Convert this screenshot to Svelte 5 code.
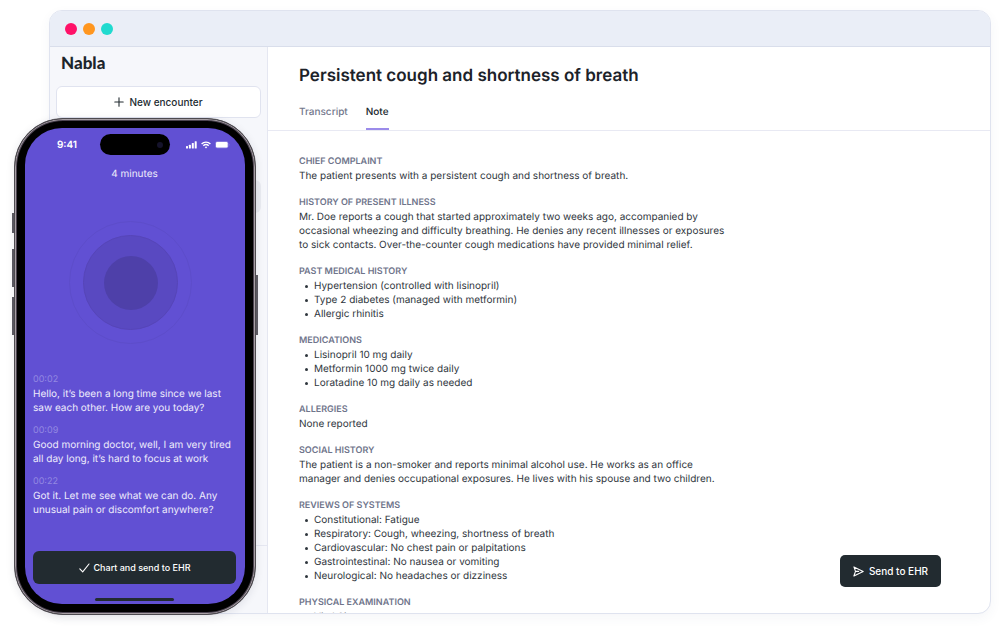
<script>
  const sections = [
    { title: 'Chief complaint', text: 'The patient presents with a persistent cough and shortness of breath.' },
    {
      title: 'History of present illness',
      text: 'Mr. Doe reports a cough that started approximately two weeks ago, accompanied by occasional wheezing and difficulty breathing. He denies any recent illnesses or exposures to sick contacts. Over-the-counter cough medications have provided minimal relief.'
    },
    {
      title: 'Past medical history',
      items: ['Hypertension (controlled with lisinopril)', 'Type 2 diabetes (managed with metformin)', 'Allergic rhinitis']
    },
    {
      title: 'Medications',
      items: ['Lisinopril 10 mg daily', 'Metformin 1000 mg twice daily', 'Loratadine 10 mg daily as needed']
    },
    { title: 'Allergies', text: 'None reported' },
    {
      title: 'Social history',
      text: 'The patient is a non-smoker and reports minimal alcohol use. He works as an office manager and denies occupational exposures. He lives with his spouse and two children.'
    },
    {
      title: 'Reviews of systems',
      items: [
        'Constitutional: Fatigue',
        'Respiratory: Cough, wheezing, shortness of breath',
        'Cardiovascular: No chest pain or palpitations',
        'Gastrointestinal: No nausea or vomiting',
        'Neurological: No headaches or dizziness'
      ]
    },
    { title: 'Physical examination', items: ['Vital Signs:'] }
  ];

  const transcript = [
    { time: '00:02', text: 'Hello, it’s been a long time since we last saw each other. How are you today?' },
    { time: '00:09', text: 'Good morning doctor, well, I am very tired all day long, it’s hard to focus at work' },
    { time: '00:22', text: 'Got it. Let me see what we can do. Any unusual pain or discomfort anywhere?' }
  ];
</script>

<div class="stage">
  <div class="window">
    <div class="titlebar">
      <span class="dot red"></span>
      <span class="dot orange"></span>
      <span class="dot teal"></span>
    </div>
    <div class="body">
      <aside class="sidebar">
        <div class="logo">Nabla</div>
        <button class="new" type="button">
          <svg width="10" height="10" viewBox="0 0 10 10" fill="none" stroke="#222b30" stroke-width="1.1" stroke-linecap="round">
            <path d="M5 .8v8.4M.8 5h8.4" />
          </svg>
          New encounter
        </button>
        <div class="current"></div>
        <div class="account"></div>
      </aside>
      <main>
        <header>
          <h1>Persistent cough and shortness of breath</h1>
          <nav>
            <a href="#transcript">Transcript</a>
            <a href="#note" class="active">Note</a>
          </nav>
        </header>
        <div class="note">
          {#each sections as s}
            <section>
              <h2>{s.title}</h2>
              {#if s.text}<p>{s.text}</p>{/if}
              {#if s.items}
                <ul>
                  {#each s.items as item}<li>{item}</li>{/each}
                </ul>
              {/if}
            </section>
          {/each}
        </div>
        <button class="send" type="button">
          <svg width="11" height="11" viewBox="0 0 11 11" fill="none" stroke="#fff" stroke-width="1.1" stroke-linejoin="round" stroke-linecap="round">
            <path d="M.9 .9 10.2 5.4.9 10 2.5 5.4ZM2.5 5.4H5.6" />
          </svg>
          Send to EHR
        </button>
      </main>
    </div>
  </div>

  <div class="phone">
    <span class="key mute"></span>
    <span class="key up"></span>
    <span class="key down"></span>
    <span class="key power"></span>
    <div class="screen">
      <div class="status">
        <span class="clock">9:41</span>
        <span class="island"><span class="lens"></span></span>
        <span class="signals">
          <svg width="11" height="8" viewBox="0 0 11 8" fill="#fff">
            <rect x="0" y="5" width="2" height="2.6" rx=".5" />
            <rect x="2.9" y="3.8" width="2" height="3.8" rx=".5" />
            <rect x="5.8" y="2" width="2" height="5.6" rx=".5" />
            <rect x="8.7" y=".3" width="2" height="7.3" rx=".5" />
          </svg>
          <svg width="10" height="8" viewBox="0 0 10 8" fill="none" stroke="#fff" stroke-width="1.4">
            <path d="M.6 2.9C3 .5 7 .5 9.4 2.9M2.3 4.7c1.5-1.4 3.9-1.4 5.4 0" />
            <path d="M3.7 6.1Q5 5 6.3 6.1L5 7.6Z" fill="#fff" stroke="none" />
          </svg>
          <svg width="15" height="8" viewBox="0 0 15 8">
            <rect x=".3" y=".3" width="13" height="7" rx="2" fill="#8f84e0" />
            <rect x="1" y="1" width="11.6" height="5.6" rx="1.3" fill="#fff" />
            <path d="M13.9 2.7q1 1 0 2.2z" fill="#a79fe6" />
          </svg>
        </span>
      </div>
      <div class="duration">4 minutes</div>
      <div class="pulse"><div class="ring"><div class="core"></div></div></div>
      <div class="lines">
        {#each transcript as t}
          <div class="line">
            <time>{t.time}</time>
            <p>{t.text}</p>
          </div>
        {/each}
      </div>
      <button class="chart" type="button">
        <svg width="11" height="10" viewBox="0 0 11 10" fill="none" stroke="#fff" stroke-width="1.1" stroke-linecap="round" stroke-linejoin="round">
          <path d="M.8 5.8 3.7 8.8 10 1" />
        </svg>
        Chart and send to EHR
      </button>
      <div class="home"></div>
    </div>
  </div>
</div>

<style>
  :global(body) {
    margin: 0;
    background: #fff;
  }
  * {
    box-sizing: border-box;
  }
  .stage {
    position: relative;
    height: 100vh;
    padding: 10px 11px 15px 49px;
    font-family: Inter, sans-serif;
    font-size: 10px;
    line-height: 14px;
    font-optical-sizing: none;
    text-rendering: geometricPrecision;
    color: #2f363d;
    overflow: hidden;
  }
  h1, h2, p, ul {
    margin: 0;
    padding: 0;
  }
  button {
    font: inherit;
    font-weight: 500;
    display: flex;
    align-items: center;
    justify-content: center;
    border: 0;
    padding: 0;
  }
  .window {
    height: 100%;
    display: flex;
    flex-direction: column;
    border: 1px solid #dfe3ef;
    border-radius: 13px;
    overflow: hidden;
    background: #fff;
    box-shadow: 0 4px 12px rgba(60, 70, 110, 0.05);
  }
  .titlebar {
    flex: none;
    height: 36px;
    display: flex;
    align-items: center;
    gap: 6px;
    padding-left: 15px;
    background: #eaeef7;
    border-bottom: 1px solid #d9deeb;
  }
  .dot {
    width: 12px;
    height: 12px;
    border-radius: 50%;
  }
  .red { background: #ff1168; }
  .orange { background: #ff961f; }
  .teal { background: #20dacf; }
  .body {
    flex: 1;
    min-height: 0;
    display: flex;
  }
  .sidebar {
    flex: none;
    width: 218px;
    display: flex;
    flex-direction: column;
    padding: 6px 6px 0;
    background: #f6f7fb;
    border-right: 1px solid #e5e7f1;
  }
  .logo {
    padding-left: 5px;
    font-family: Lato, sans-serif;
    font-weight: 900;
    font-size: 17px;
    line-height: 20px;
    color: #1d252b;
  }
  .new {
    height: 32px;
    margin-top: 13px;
    gap: 5px;
    border: 1px solid #e0e3ef;
    border-radius: 6px;
    background: #fff;
    color: #222b30;
  }
  .current {
    height: 33px;
    margin-top: 62px;
    border-radius: 6px;
    background: #e9ebf1;
  }
  .account {
    height: 68px;
    margin: auto -6px 0;
    border-top: 1px solid #e5e7f1;
  }
  main {
    position: relative;
    flex: 1;
    min-width: 0;
    overflow: hidden;
  }
  header {
    padding: 17px 31px 0;
    border-bottom: 1px solid #e8e9f3;
  }
  h1 {
    font-size: 17px;
    line-height: 24px;
    font-weight: 600;
    color: #1c2229;
  }
  nav {
    display: flex;
    gap: 18px;
    margin-top: 17px;
  }
  nav a {
    height: 25px;
    color: #73788d;
    text-decoration: none;
    font-weight: 500;
  }
  nav .active {
    color: #20282e;
    border-bottom: 2px solid #9b8bea;
  }
  .note {
    max-width: 496px;
    padding: 23px 31px 0;
    display: flex;
    flex-direction: column;
    gap: 12px;
  }
  h2 {
    font-size: 9px;
    line-height: 15px;
    font-weight: 600;
    text-transform: uppercase;
    color: #6f758b;
  }
  ul {
    list-style: none;
  }
  li {
    display: flex;
    align-items: center;
    gap: 6px;
    padding-left: 6px;
  }
  li::before {
    content: '';
    flex: none;
    width: 3px;
    height: 3px;
    border-radius: 50%;
    background: #2f363d;
  }
  .send {
    position: absolute;
    right: 49px;
    bottom: 26px;
    width: 101px;
    height: 32px;
    gap: 5px;
    border-radius: 5px;
    background: #222b30;
    color: #fff;
  }
  .phone {
    position: absolute;
    left: 14px;
    top: 118px;
    bottom: 14px;
    width: 242px;
    padding: 9px 10px 10px;
    border: 1px solid #4d4a50;
    border-radius: 49px;
    background: #000;
    box-shadow: inset 0 0 0 1px #a79fa4, inset 0 0 0 2px #4b4350, 0 2px 8px rgba(30, 30, 60, 0.1);
  }
  .key {
    position: absolute;
    width: 2px;
    background: #77747c;
    border: 1px solid #5a5860;
  }
  .mute { left: -3px; top: 94px; height: 20px; }
  .up { left: -3px; top: 130px; height: 38px; }
  .down { left: -3px; top: 178px; height: 38px; }
  .power { right: -3px; top: 156px; height: 60px; }
  .screen {
    height: 100%;
    display: flex;
    flex-direction: column;
    padding: 6px 9px 3px 8px;
    border-radius: 37px;
    background: #6150d3;
    color: #eeecfb;
  }
  .status {
    display: grid;
    grid-template-columns: 1fr 70px 1fr;
    align-items: center;
    padding-left: 1px;
  }
  .clock {
    text-align: center;
    font-weight: 600;
    color: #fff;
  }
  .island {
    display: flex;
    align-items: center;
    justify-content: flex-end;
    height: 21px;
    padding-right: 7px;
    border-radius: 11px;
    background: #000;
  }
  .lens {
    width: 6px;
    height: 6px;
    border-radius: 50%;
    background: #15132b;
  }
  .signals {
    display: flex;
    align-items: center;
    justify-content: center;
    gap: 4px;
    padding-left: 9px;
  }
  .duration {
    margin-top: 12px;
    text-align: center;
  }
  .pulse {
    width: 123px;
    height: 123px;
    margin: 40px 0 0 36px;
    display: grid;
    place-items: center;
    border: 1px solid #5d4dca;
    border-radius: 50%;
  }
  .ring {
    width: 95px;
    height: 95px;
    display: grid;
    place-items: center;
    border: 1px solid #5645b8;
    border-radius: 50%;
    background: #5949c1;
  }
  .core {
    width: 54px;
    height: 54px;
    border-radius: 50%;
    background: #4e40a9;
  }
  .lines {
    display: flex;
    flex-direction: column;
    gap: 8px;
    margin-top: auto;
  }
  time {
    display: block;
    font-size: 9px;
    line-height: 15px;
    color: #9388e2;
  }
  .chart {
    flex: none;
    height: 33px;
    margin-top: 34px;
    gap: 4px;
    border-radius: 6px;
    background: #222b30;
    color: #fff;
    font-size: 9px;
  }
  .home {
    flex: none;
    width: 79px;
    height: 3px;
    margin: 14px 0 0 62px;
    border-radius: 2px;
    background: #222b30;
  }
</style>
